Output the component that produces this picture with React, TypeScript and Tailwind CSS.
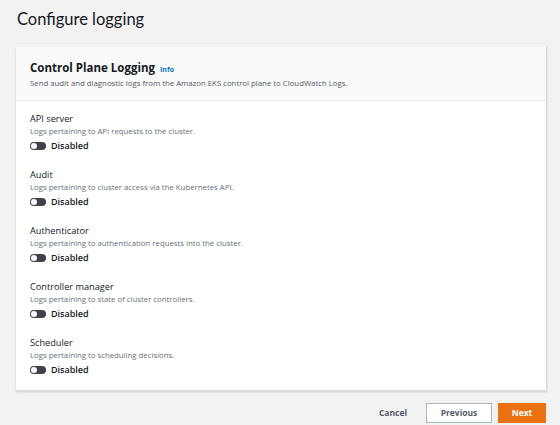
const items = [
  { name: "API server", desc: "Logs pertaining to API requests to the cluster." },
  { name: "Audit", desc: "Logs pertaining to cluster access via the Kubernetes API." },
  { name: "Authenticator", desc: "Logs pertaining to authentication requests into the cluster." },
  { name: "Controller manager", desc: "Logs pertaining to state of cluster controllers." },
  { name: "Scheduler", desc: "Logs pertaining to scheduling decisions." },
];

function Toggle() {
  return (
    <span className="flex h-[8px] w-[16px] items-center rounded-full bg-[#3f444b] px-[1px]">
      <span className="h-[6px] w-[6px] rounded-full bg-white" />
    </span>
  );
}

export default function App() {
  return (
    <div
      className="h-[425px] w-[560px] overflow-hidden bg-[#f2f2f2] text-[#16191f]"
      style={{ fontFamily: '"Open Sans", "Noto Sans", sans-serif' }}
    >
      <h1 className="pl-[17px] pt-[6px] text-[16.5px] leading-[26px] text-[#16191f]" style={{ fontFamily: "Lato, sans-serif" }}>
        Configure logging
      </h1>

      <div className="ml-[16px] mt-[15px] w-[531px] border-r border-b border-[#d5dbdb] bg-white shadow-[0_1px_2px_rgba(0,0,0,0.15)]">
        <div className="border-b border-[#eaeded] bg-[#fafafa] px-[14px] pt-[12px] pb-[11px]">
          <div className="flex items-baseline gap-[5px]">
            <span className="text-[11.5px] font-bold leading-[18px]">Control Plane Logging</span>
            <span className="text-[7px] font-bold text-[#0073bb]">Info</span>
          </div>
          <p className="text-[7.8px] leading-[12px] text-[#545b64]">
            Send audit and diagnostic logs from the Amazon EKS control plane to CloudWatch Logs.
          </p>
        </div>

        <div className="flex flex-col gap-[15px] px-[14px] pt-[11px] pb-[13px]">
          {items.map((it) => (
            <div key={it.name}>
              <div className="text-[9.2px] leading-[13px] text-[#16191f]">{it.name}</div>
              <div className="text-[7.8px] leading-[12px] text-[#687078]">{it.desc}</div>
              <div className="mt-[2px] flex items-center gap-[5px]">
                <Toggle />
                <span className="text-[9px] font-semibold leading-[14px] text-[#16191f]">Disabled</span>
              </div>
            </div>
          ))}
        </div>
      </div>

      <div className="mt-[12px] flex items-center justify-end pr-[14px]">
        <span className="mr-[19px] text-[8.5px] font-bold text-[#545b64]">Cancel</span>
        <span className="flex h-[20px] w-[66px] items-center justify-center border border-[#aab7b8] bg-white text-[8.5px] font-bold text-[#545b64]">
          Previous
        </span>
        <span className="ml-[6px] flex h-[20px] w-[48px] items-center justify-center bg-[#ec7211] text-[8.5px] font-bold text-white">
          Next
        </span>
      </div>
    </div>
  );
}
